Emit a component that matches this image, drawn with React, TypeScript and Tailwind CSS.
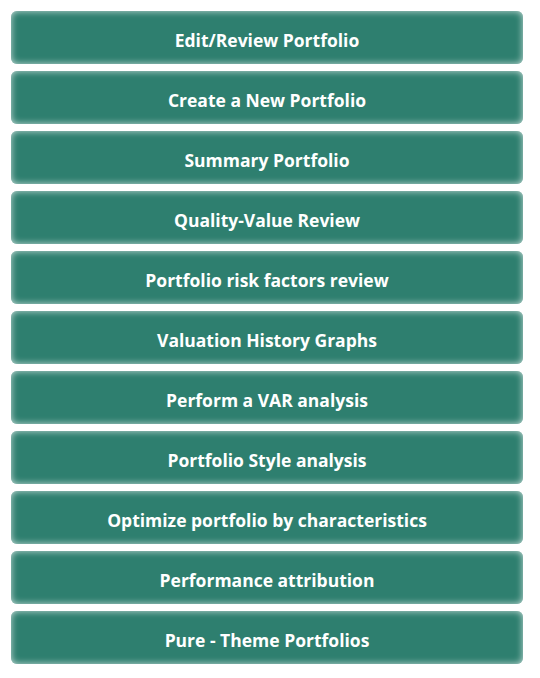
const items = [
  "Edit/Review Portfolio",
  "Create a New Portfolio",
  "Summary Portfolio",
  "Quality-Value Review",
  "Portfolio risk factors review",
  "Valuation History Graphs",
  "Perform a VAR analysis",
  "Portfolio Style analysis",
  "Optimize portfolio by characteristics",
  "Performance attribution",
  "Pure - Theme Portfolios",
];

export default function App() {
  return (
    <div className="min-h-screen bg-white px-[11px] pt-[11px] font-['Open_Sans',sans-serif]">
      <div className="flex w-[512px] flex-col gap-[7px]">
        {items.map((label) => (
          <button
            key={label}
            type="button"
            className="flex h-[53px] items-center justify-center rounded-[6px] bg-[#2e7f6f] pt-[5px] text-[17.5px] font-bold text-white shadow-[inset_0_0_7px_rgba(255,255,255,0.75)]"
          >
            {label}
          </button>
        ))}
      </div>
    </div>
  );
}
